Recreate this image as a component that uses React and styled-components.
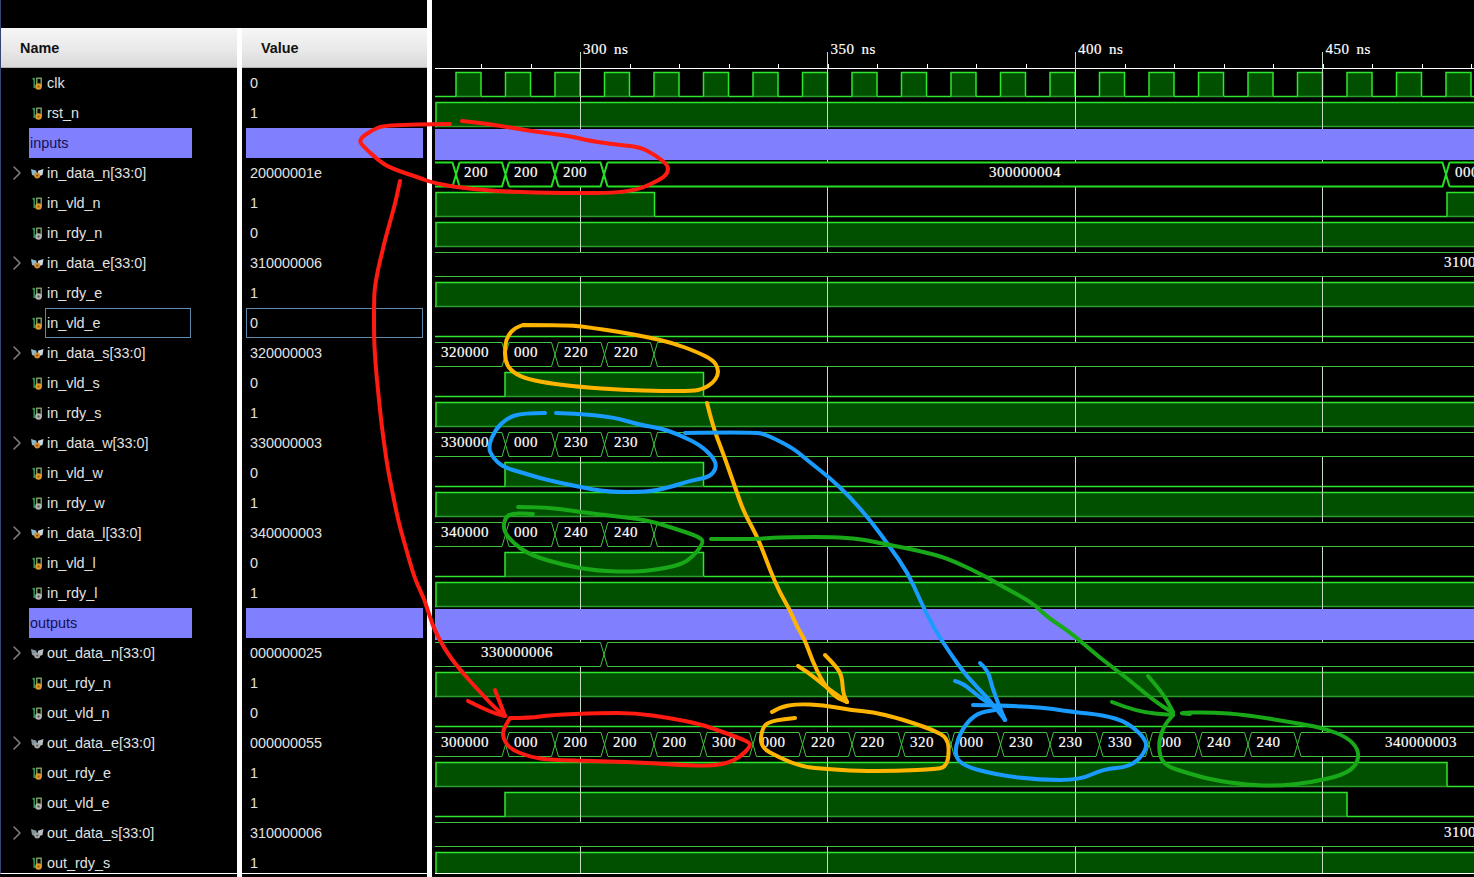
import React from 'react';
import styled, { createGlobalStyle } from 'styled-components';
import { ChevronRight } from 'lucide-react';

const GlobalStyle = createGlobalStyle`
  html, body {
    margin: 0;
    background: #000;
    overflow: hidden;
  }
`;

const Screen = styled.div`
  position: relative;
  display: flex;
  width: 1474px;
  height: 877px;
  background: #000;
  overflow: hidden;
  font-family: 'Liberation Sans', Arial, sans-serif;
`;

const Column = styled.div`
  width: ${(p) => p.$width}px;
  flex: none;
  height: 874px;
  padding-top: 28px;
  box-sizing: border-box;
  border-bottom: 1px solid #fff;
  display: flex;
  flex-direction: column;
  overflow: hidden;
`;

const NameColumn = styled(Column)`
  border-left: 1px solid #33466e;
`;

const Sash = styled.div`
  width: ${(p) => p.$width}px;
  flex: none;
  margin-top: ${(p) => p.$top}px;
  background: #fff;
`;

const HeaderCell = styled.div`
  height: 40px;
  flex: none;
  box-sizing: border-box;
  padding-left: ${(p) => p.$pad}px;
  display: flex;
  align-items: center;
  font-size: 14.4px;
  font-weight: bold;
  color: #111;
  background: linear-gradient(#f6f6f6, #e9e9e9 55%, #d8d8d8);
  border-bottom: 1px solid #b0b0b0;
`;

const NameRow = styled.div`
  height: 30px;
  flex: none;
  display: grid;
  grid-template-columns: 30px 16px 146px;
  align-items: center;
  font-size: 14.4px;
  color: #e2e2e2;
`;

const Caret = styled.span`
  display: flex;
  justify-content: flex-end;
  padding-right: 2px;
  color: #808080;
`;

const NameLabel = styled.span`
  height: 30px;
  line-height: 30px;
  white-space: nowrap;
  box-sizing: border-box;
  ${(p) =>
    p.$selected &&
    `
    margin-left: -2px;
    margin-right: 2px;
    padding-left: 1px;
    line-height: 28px;
    border: 1px solid #5f89ab;
  `}
`;

const GroupRow = styled.div`
  height: 30px;
  flex: none;
  box-sizing: border-box;
  margin-left: ${(p) => p.$left}px;
  width: ${(p) => p.$width}px;
  padding-left: 1px;
  line-height: 30px;
  font-size: 14.4px;
  color: #12124e;
  background: #8080ff;
`;

const ValueRow = styled.div`
  height: 30px;
  flex: none;
  box-sizing: border-box;
  line-height: 30px;
  padding-left: 8px;
  font-size: 14.4px;
  color: #e2e2e2;
`;

const SelectedValue = styled(ValueRow)`
  margin-left: 4px;
  width: 177px;
  padding-left: 3px;
  line-height: 28px;
  border: 1px solid #5f89ab;
`;

const WavePane = styled.div`
  flex: 1;
  min-width: 0;
`;

const WaveSvg = styled.svg`
  display: block;
`;

const Overlay = styled.svg`
  position: absolute;
  left: 0;
  top: 0;
  pointer-events: none;
`;

const WaveText = styled.text`
  font-family: 'Liberation Serif', 'DejaVu Serif', serif;
  font-size: 15px;
  letter-spacing: 0.5px;
  fill: #fff;
  stroke: #fff;
  stroke-width: 0.2px;
`;

const Stroke = styled.path`
  fill: none;
  stroke: ${(p) => p.$color};
  stroke-width: 4;
  stroke-linecap: round;
  stroke-linejoin: round;
`;

const GRID = [580, 827.5, 1075, 1322.5];
const STEP = 49.5;
const ROW_TOP = (i) => 72 + 30 * i;
const END = 1474;
const BRIGHT = '#2ee62e';
const DIM = '#2c9c2c';
const FILL = '#005000';

const IconScalar = ({ out }) => (
  <svg width="14" height="16" viewBox="0 0 14 16">
    <path d="M3.2 3v10M1.6 4.4L3.2 3" stroke="#2f9a55" strokeWidth="1.5" fill="none" />
    <rect x="5.8" y="3.2" width="4.4" height="8" fill="none" stroke="#8fae6a" strokeWidth="1.3" />
    <circle cx="7.5" cy="11.5" r="3.3" fill={out ? '#b4b4b4' : '#e0992f'} />
    <circle cx="7.5" cy="11.5" r="1.2" fill={out ? '#5c5c5c' : '#a8641a'} />
  </svg>
);

const IconBus = ({ out }) => (
  <svg width="14" height="16" viewBox="0 0 14 16">
    <path d="M0 4l5.5 1.8v5.7l-4.5-1.6z" fill={out ? '#84949c' : '#8cb8d0'} />
    <path d="M12.5 4l-5.5 1.8v5.7l4.5-1.6z" fill={out ? '#b4bec4' : '#c8d8e0'} />
    <circle cx="6.2" cy="10.5" r="3" fill={out ? '#a8a8a8' : '#d8902f'} />
    <circle cx="6.2" cy="10.5" r="1.1" fill={out ? '#5c5c5c' : '#8a5016'} />
  </svg>
);

const signals = [
  { name: 'clk', value: '0' },
  { name: 'rst_n', value: '1' },
  { name: 'inputs', group: true },
  { name: 'in_data_n[33:0]', value: '20000001e', bus: true },
  { name: 'in_vld_n', value: '1' },
  { name: 'in_rdy_n', value: '0', out: true },
  { name: 'in_data_e[33:0]', value: '310000006', bus: true },
  { name: 'in_rdy_e', value: '1', out: true },
  { name: 'in_vld_e', value: '0', selected: true },
  { name: 'in_data_s[33:0]', value: '320000003', bus: true },
  { name: 'in_vld_s', value: '0' },
  { name: 'in_rdy_s', value: '1', out: true },
  { name: 'in_data_w[33:0]', value: '330000003', bus: true },
  { name: 'in_vld_w', value: '0' },
  { name: 'in_rdy_w', value: '1', out: true },
  { name: 'in_data_l[33:0]', value: '340000003', bus: true },
  { name: 'in_vld_l', value: '0' },
  { name: 'in_rdy_l', value: '1', out: true },
  { name: 'outputs', group: true },
  { name: 'out_data_n[33:0]', value: '000000025', bus: true, out: true },
  { name: 'out_rdy_n', value: '1' },
  { name: 'out_vld_n', value: '0', out: true },
  { name: 'out_data_e[33:0]', value: '000000055', bus: true, out: true },
  { name: 'out_rdy_e', value: '1' },
  { name: 'out_vld_e', value: '1', out: true },
  { name: 'out_data_s[33:0]', value: '310000006', bus: true, out: true },
  { name: 'out_rdy_s', value: '1' },
];

// [start, end] of every stretch where the signal is high
const clockHighs = [];
for (let x = 456; x < END; x += STEP) clockHighs.push([x, x + 25]);

const pulse = [[505, 703.5]];

const scalars = [
  { row: 0, highs: clockHighs },
  { row: 1, highs: [[436, END + 2]] },
  { row: 4, highs: [[436, 654.5], [1447, END + 2]] },
  { row: 5, highs: [[436, END + 2]] },
  { row: 7, highs: [[436, END + 2]] },
  { row: 8, highs: [] },
  { row: 10, highs: pulse },
  { row: 11, highs: [[436, END + 2]] },
  { row: 13, highs: pulse },
  { row: 14, highs: [[436, END + 2]] },
  { row: 16, highs: pulse },
  { row: 17, highs: [[436, END + 2]] },
  { row: 20, highs: [[436, END + 2]] },
  { row: 21, highs: [] },
  { row: 23, highs: [[436, 1447]] },
  { row: 24, highs: [[505, 1347]] },
  { row: 26, highs: [[436, END + 2]] },
];

const crossings = (n) => Array.from({ length: n }, (_, k) => 505.5 + k * STEP);
const inLabels = (first, mid) => [
  { x: 441, text: first },
  { x: 514, text: '000' },
  { x: 564, text: mid },
  { x: 614, text: mid },
];
const outE = ['000', '200', '200', '200', '300', '000', '220', '220', '320', '000', '230', '230', '330', '000', '240', '240'];

const buses = [
  {
    row: 3,
    thick: true,
    xs: [456, 505.5, 555, 604, 1446],
    labels: [
      { x: 464, text: '200' },
      { x: 514, text: '200' },
      { x: 563, text: '200' },
      { x: 989, text: '300000004' },
      { x: 1455, text: '000000000' },
    ],
  },
  { row: 6, xs: [], labels: [{ x: 1444, text: '310000006' }] },
  { row: 9, xs: crossings(4), labels: inLabels('320000', '220') },
  { row: 12, xs: crossings(4), labels: inLabels('330000', '230') },
  { row: 15, xs: crossings(4), labels: inLabels('340000', '240') },
  { row: 19, xs: [604], labels: [{ x: 481, text: '330000006' }] },
  {
    row: 22,
    xs: crossings(17),
    labels: [
      { x: 441, text: '300000' },
      ...outE.map((text, k) => ({ x: 514 + k * STEP, text })),
      { x: 1385, text: '340000003' },
    ],
  },
  { row: 25, xs: [], labels: [{ x: 1444, text: '310000006' }] },
];

const Scalar = ({ row, highs }) => {
  const top = ROW_TOP(row) + 0.5;
  const bottom = top + 24;
  let outline = '';
  let cursor = 435;
  highs.forEach(([a, b]) => {
    outline += `M${cursor} ${bottom}H${a}V${top}H${b}V${bottom}`;
    cursor = b;
  });
  if (cursor < END) outline += `M${cursor} ${bottom}H${END}`;
  return (
    <g>
      {highs.map(([a, b]) => (
        <rect key={a} x={a} y={top} width={b - a} height={24} fill={FILL} />
      ))}
      <path d={outline} stroke={BRIGHT} strokeWidth="1.5" fill="none" />
      {highs.map(([a, b]) => (
        <path key={a} d={`M${a} ${bottom}H${b}`} stroke={DIM} strokeWidth="1.5" fill="none" />
      ))}
    </g>
  );
};

const Bus = ({ row, xs, labels, thick }) => {
  const top = ROW_TOP(row) + 0.5;
  const bottom = top + 24;
  const half = 3.5;
  let d = '';
  let cursor = 435;
  xs.forEach((x) => {
    d += `M${cursor} ${top}H${x - half}L${x + half} ${bottom}M${cursor} ${bottom}H${x - half}L${x + half} ${top}`;
    cursor = x + half;
  });
  d += `M${cursor} ${top}H${END}M${cursor} ${bottom}H${END}`;
  return (
    <g>
      <rect x={435} y={top} width={END - 435} height={24} fill="#000" />
      <path d={d} fill="none" stroke={thick ? '#25e025' : '#3fc43f'} strokeWidth={thick ? 2 : 1} />
      {labels.map((l) => (
        <WaveText key={l.x} x={l.x} y={top + 14.5}>
          {l.text}
        </WaveText>
      ))}
    </g>
  );
};

const Ruler = () => {
  const ticks = [];
  for (let k = -2; k < 19; k += 1) ticks.push(580 + k * STEP);
  return (
    <g>
      <path d={`M435 68.5H${END}`} stroke="#fff" />
      {ticks.map((x) => (
        <path key={x} d={`M${Math.round(x) + 0.5} 64V68`} stroke="#fff" />
      ))}
      {GRID.map((x, k) => (
        <g key={x}>
          <WaveText x={x + 3} y={54}>{300 + k * 50}</WaveText>
          <WaveText x={x + 34} y={54}>ns</WaveText>
        </g>
      ))}
    </g>
  );
};

const Waveform = () => (
  <WaveSvg width="1042" height="877" viewBox="432 0 1042 877">
    <Ruler />
    {scalars.map((s) => (
      <Scalar key={s.row} {...s} />
    ))}
    {GRID.map((x) => (
      <path key={x} d={`M${Math.floor(x) + 0.5} 52V873`} stroke="#c4dcc4" />
    ))}
    <rect x="435" y="129" width="1039" height="31" fill="#8080ff" />
    <rect x="435" y="609" width="1039" height="31" fill="#8080ff" />
    {buses.map((b) => (
      <Bus key={b.row} {...b} />
    ))}
    <rect x="432" y="873" width="1042" height="4" fill="#000" />
    <path d="M435 873.5H1474" stroke="#fff" />
  </WaveSvg>
);

// hand-drawn marks, midpoints joined by quadratics so they stay a bit wobbly
const smooth = (pts) => {
  let d = `M${pts[0][0]} ${pts[0][1]}`;
  for (let i = 1; i < pts.length - 1; i += 1) {
    const mx = (pts[i][0] + pts[i + 1][0]) / 2;
    const my = (pts[i][1] + pts[i + 1][1]) / 2;
    d += `Q${pts[i][0]} ${pts[i][1]} ${mx} ${my}`;
  }
  const last = pts[pts.length - 1];
  return `${d}L${last[0]} ${last[1]}`;
};

const marks = [
  {
    color: '#ff1a12',
    lines: [
      [[462, 121], [490, 124], [530, 131], [570, 136], [590, 141], [620, 145], [640, 147], [655, 155], [668, 165], [668, 173], [660, 180], [630, 193], [560, 193], [510, 192], [460, 188], [430, 182], [420, 178], [390, 168], [378, 160], [365, 148], [358, 140], [372, 130], [385, 125], [450, 124]],
      [[400, 181], [396, 200], [392, 215], [385, 240], [382, 253], [379, 265], [375, 285], [374, 300], [374, 340], [376, 370], [378, 390], [381, 420], [385, 450], [388, 470], [392, 490], [398, 520], [405, 545], [415, 580], [425, 600], [432, 625], [445, 650], [460, 670], [480, 692], [495, 708], [505, 716]],
      [[468, 701], [490, 712], [505, 716]],
      [[495, 690], [502, 708], [505, 716]],
      [[510, 718], [530, 718], [550, 715], [600, 713], [635, 713], [670, 718], [700, 724], [720, 731], [750, 742], [750, 747], [740, 757], [728, 763], [710, 766], [680, 765], [650, 763], [600, 761], [550, 760], [530, 757], [510, 749], [503, 738], [503, 730], [510, 718]],
    ],
  },
  {
    color: '#ffb400',
    lines: [
      [[523, 325], [570, 325], [593, 328], [620, 332], [647, 337], [673, 343], [697, 352], [713, 360], [718, 368], [718, 375], [713, 383], [703, 389], [693, 391], [663, 391], [623, 390], [580, 387], [547, 383], [523, 378], [510, 370], [505, 360], [505, 345], [508, 335], [515, 328], [523, 325]],
      [[707, 403], [713, 427], [723, 453], [735, 487], [743, 510], [752, 527], [760, 543], [770, 570], [780, 593], [790, 610], [797, 627], [805, 640], [812, 660], [823, 683], [835, 697], [847, 702]],
      [[798, 666], [808, 672], [827, 688], [847, 702]],
      [[825, 655], [837, 667], [842, 677], [843, 693], [847, 702]],
      [[772, 712], [780, 707], [797, 704], [823, 705], [850, 710], [873, 712], [897, 718], [913, 723], [933, 730], [948, 738], [949, 757], [945, 767], [937, 769], [897, 771], [857, 771], [827, 769], [803, 767], [780, 758], [760, 747], [762, 728], [770, 721], [795, 718]],
    ],
  },
  {
    color: '#1a9bff',
    lines: [
      [[545, 413], [523, 413], [507, 418], [495, 430], [488, 447], [493, 458], [503, 467], [523, 473], [547, 480], [580, 487], [607, 492], [647, 492], [667, 488], [693, 480], [710, 477], [717, 467], [713, 457], [700, 445], [680, 435], [660, 428], [640, 425], [613, 417], [580, 414], [556, 413]],
      [[685, 433], [755, 432], [767, 435], [793, 448], [807, 460], [830, 478], [850, 497], [870, 520], [890, 547], [908, 573], [920, 600], [933, 627], [950, 653], [967, 677], [987, 697], [1005, 720]],
      [[955, 681], [963, 683], [980, 698], [1000, 710], [1005, 720]],
      [[980, 663], [988, 670], [992, 687], [1000, 708], [1005, 720]],
      [[973, 705], [1033, 706], [1073, 712], [1103, 715], [1127, 722], [1147, 740], [1145, 753], [1130, 767], [1103, 769], [1080, 780], [1040, 780], [997, 775], [960, 765], [954, 750], [963, 727], [977, 713], [995, 710]],
    ],
  },
  {
    color: '#18a818',
    lines: [
      [[518, 507], [547, 507], [580, 512], [613, 516], [647, 520], [673, 528], [700, 537], [704, 543], [688, 562], [667, 568], [637, 572], [597, 571], [563, 565], [530, 555], [513, 543], [503, 530], [505, 518], [512, 513], [533, 514]],
      [[711, 539], [760, 539], [780, 537], [850, 537], [890, 545], [920, 551], [947, 558], [983, 575], [1000, 585], [1033, 603], [1047, 617], [1070, 632], [1100, 658], [1127, 678], [1153, 700], [1173, 713]],
      [[1112, 702], [1137, 712], [1173, 715]],
      [[1148, 676], [1163, 693], [1173, 712]],
      [[1190, 714], [1173, 713], [1210, 712], [1247, 715], [1290, 722], [1323, 728], [1347, 737], [1359, 750], [1357, 765], [1343, 775], [1313, 782], [1280, 786], [1247, 785], [1213, 780], [1187, 773], [1163, 765], [1158, 747], [1163, 727], [1173, 715]],
    ],
  },
];

const Annotations = () => (
  <Overlay width="1474" height="877" viewBox="0 0 1474 877">
    {marks.map((m) =>
      m.lines.map((pts) => <Stroke key={`${m.color}-${pts[0]}`} $color={m.color} d={smooth(pts)} />),
    )}
  </Overlay>
);

export default function App() {
  return (
    <>
      <GlobalStyle />
      <Screen>
        <NameColumn $width={237}>
          <HeaderCell $pad={19}>Name</HeaderCell>
          {signals.map((s) =>
            s.group ? (
              <GroupRow key={s.name} $left={28} $width={163}>
                {s.name}
              </GroupRow>
            ) : (
              <NameRow key={s.name}>
                <Caret>{s.bus && <ChevronRight size={24} strokeWidth={1.5} />}</Caret>
                {s.bus ? <IconBus out={s.out} /> : <IconScalar out={s.out} />}
                <NameLabel $selected={s.selected}>{s.name}</NameLabel>
              </NameRow>
            ),
          )}
        </NameColumn>
        <Sash $width={5} $top={28} />
        <Column $width={185}>
          <HeaderCell $pad={19}>Value</HeaderCell>
          {signals.map((s) => {
            if (s.group) return <GroupRow key={s.name} $left={4} $width={177} />;
            if (s.selected) return <SelectedValue key={s.name}>{s.value}</SelectedValue>;
            return <ValueRow key={s.name}>{s.value}</ValueRow>;
          })}
        </Column>
        <Sash $width={5} $top={0} />
        <WavePane>
          <Waveform />
        </WavePane>
        <Annotations />
      </Screen>
    </>
  );
}
